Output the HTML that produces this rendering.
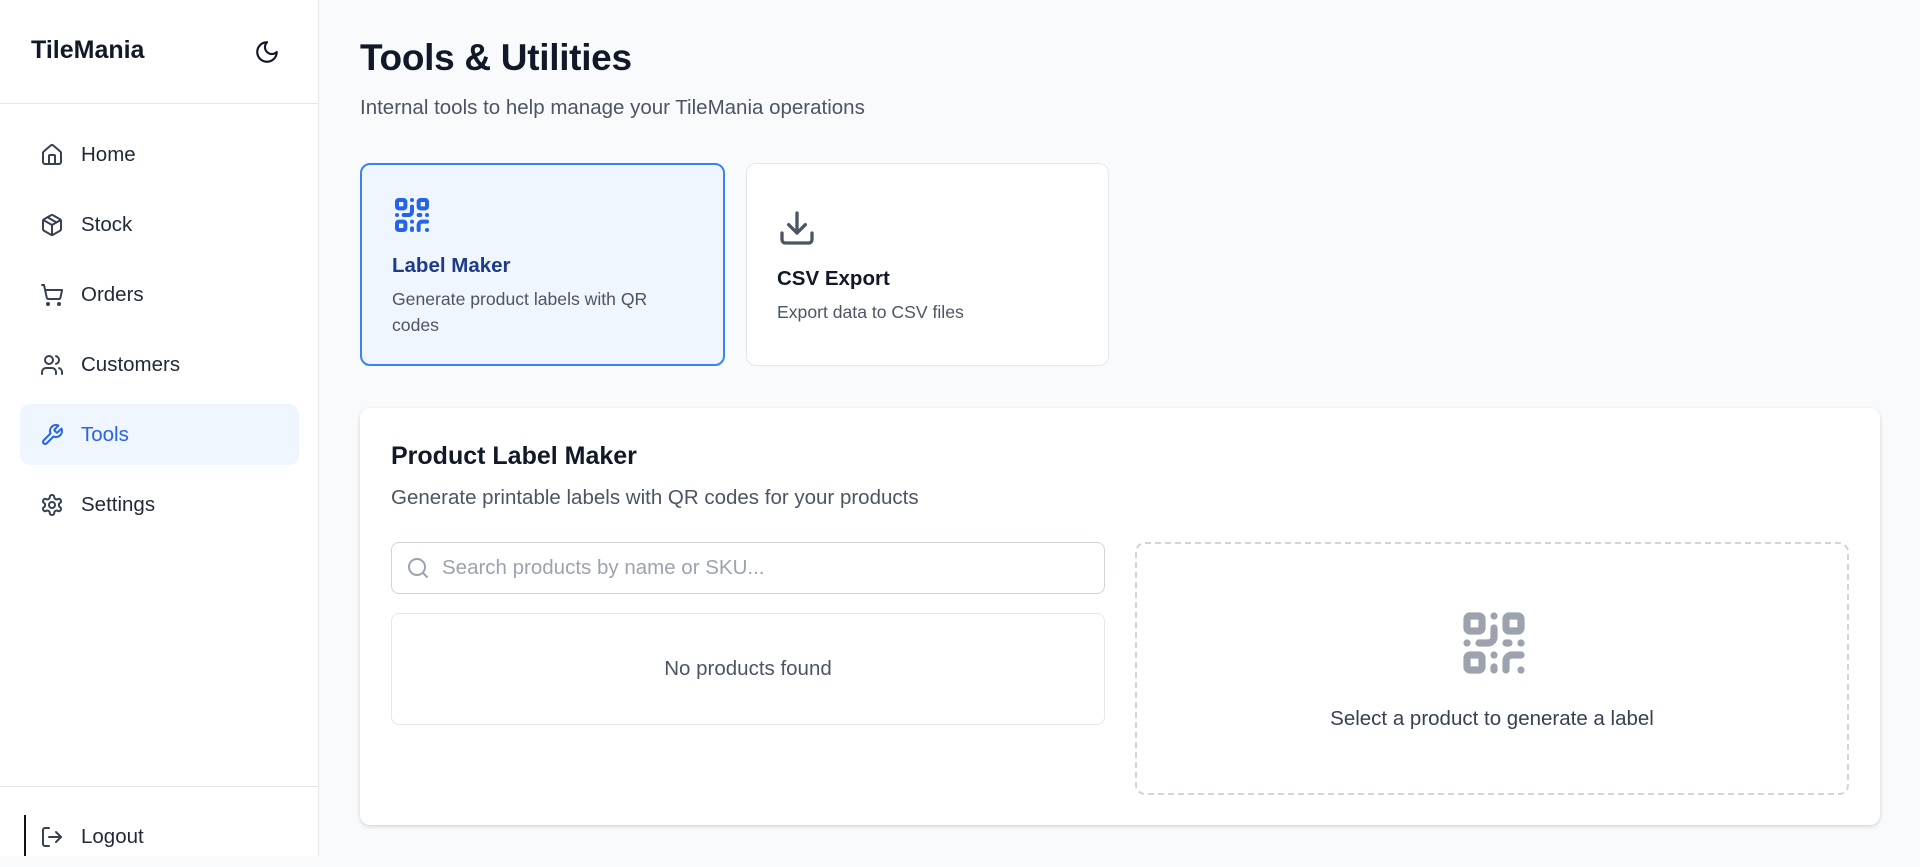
<!DOCTYPE html>
<html><head><meta charset="utf-8"><style>
*{box-sizing:border-box;margin:0;padding:0}
body{width:1920px;height:856px;overflow:hidden;background:#f9fafb;font-family:"Liberation Sans",sans-serif;color:#111827;position:relative}
.side{position:absolute;left:0;top:0;width:319px;height:856px;background:#fff;border-right:1px solid #e5e7eb}
.brand{position:absolute;left:31px;top:36px;font-size:25px;font-weight:bold;color:#111827}
.moon{position:absolute;left:254px;top:39px}
.hr{position:absolute;left:0;width:319px;height:1px;background:#e5e7eb}
.nav{position:absolute;left:20px;width:279px;height:61px;border-radius:10px;display:flex;align-items:center;font-size:20.5px;color:#1f2937}
.nav svg{position:absolute;left:20px}
.nav span{position:absolute;left:61px}
.nav.act{background:#eff6ff;color:#2563eb}
svg{fill:none;stroke-linecap:round;stroke-linejoin:round}
h1{position:absolute;left:360px;top:37px;font-size:37px;font-weight:bold;color:#111827;letter-spacing:-0.3px}
.sub{position:absolute;left:360px;top:96px;font-size:20.5px;color:#4b5563}
.card{position:absolute;top:163px;height:203px;border-radius:10px;background:#fff;border:1.5px solid #e5e7eb}
.card.a{left:360px;width:365px;background:#eff6ff;border:2px solid #3b82f6}
.card.b{left:746px;width:363px}
.ct{position:absolute;font-size:20.5px;font-weight:bold}
.cd{position:absolute;font-size:17.6px;color:#4b5563;line-height:26px}
.panel{position:absolute;left:360px;top:408px;width:1520px;height:417px;background:#fff;border-radius:10px;box-shadow:0 1px 3px rgba(0,0,0,.12),0 2px 6px rgba(0,0,0,.06)}
.search{position:absolute;left:31px;top:134px;width:714px;height:52px;border:1.5px solid #d1d5db;border-radius:8px}
.empty{position:absolute;left:31px;top:205px;width:714px;height:112px;border:1.5px solid #e5e7eb;border-radius:8px;text-align:center;line-height:109px;font-size:20.5px;color:#4b5563}
.dash{position:absolute;left:775px;top:134px;width:714px;height:253px;border:2px dashed #d1d5db;border-radius:10px}
</style></head><body>
<div class="side">
  <div class="brand">TileMania</div>
  <svg class="moon" width="26" height="26" viewBox="0 0 24 24" stroke="#111827" stroke-width="2"><path d="M12 3a6 6 0 0 0 9 9 9 9 0 1 1-9-9Z"/></svg>
  <div class="hr" style="top:103px"></div>
  <div class="nav" style="top:124px"><svg width="24" height="24" viewBox="0 0 24 24" stroke="#374151" stroke-width="2"><path d="M15 21v-8a1 1 0 0 0-1-1h-4a1 1 0 0 0-1 1v8"/><path d="M3 10a2 2 0 0 1 .709-1.528l7-5.999a2 2 0 0 1 2.582 0l7 5.999A2 2 0 0 1 21 10v9a2 2 0 0 1-2 2H5a2 2 0 0 1-2-2z"/></svg><span>Home</span></div>
  <div class="nav" style="top:194px"><svg width="24" height="24" viewBox="0 0 24 24" stroke="#374151" stroke-width="2"><path d="M21 8a2 2 0 0 0-1-1.730l-7-4a2 2 0 0 0-2 0l-7 4A2 2 0 0 0 3 8v8a2 2 0 0 0 1 1.73l7 4a2 2 0 0 0 2 0l7-4A2 2 0 0 0 21 16Z"/><path d="m3.3 7 8.7 5 8.7-5"/><path d="M12 22V12"/><path d="m7.5 4.27 9 5.15"/></svg><span>Stock</span></div>
  <div class="nav" style="top:264px"><svg width="24" height="24" viewBox="0 0 24 24" stroke="#374151" stroke-width="2"><circle cx="8" cy="21" r="1"/><circle cx="19" cy="21" r="1"/><path d="M2.05 2.05h2l2.66 12.42a2 2 0 0 0 2 1.580h9.78a2 2 0 0 0 1.95-1.57l1.65-7.43H5.12"/></svg><span>Orders</span></div>
  <div class="nav" style="top:334px"><svg width="24" height="24" viewBox="0 0 24 24" stroke="#374151" stroke-width="2"><path d="M16 21v-2a4 4 0 0 0-4-4H6a4 4 0 0 0-4 4v2"/><circle cx="9" cy="7" r="4"/><path d="M22 21v-2a4 4 0 0 0-3-3.87"/><path d="M16 3.13a4 4 0 0 1 0 7.75"/></svg><span>Customers</span></div>
  <div class="nav act" style="top:404px"><svg width="24" height="24" viewBox="0 0 24 24" stroke="#2563eb" stroke-width="2"><path d="M14.7 6.3a1 1 0 0 0 0 1.4l1.6 1.6a1 1 0 0 0 1.4 0l3.77-3.77a6 6 0 0 1-7.94 7.94l-6.91 6.910a2.12 2.12 0 0 1-3-3l6.91-6.91a6 6 0 0 1 7.94-7.94l-3.76 3.76z"/></svg><span>Tools</span></div>
  <div class="nav" style="top:474px"><svg width="24" height="24" viewBox="0 0 24 24" stroke="#374151" stroke-width="2"><path d="M12.22 2h-.44a2 2 0 0 0-2 2v.18a2 2 0 0 1-1 1.73l-.43.25a2 2 0 0 1-2 0l-.15-.08a2 2 0 0 0-2.73.73l-.22.38a2 2 0 0 0 .73 2.73l.15.1a2 2 0 0 1 1 1.72v.51a2 2 0 0 1-1 1.74l-.15.09a2 2 0 0 0-.73 2.73l.22.38a2 2 0 0 0 2.73.73l.15-.08a2 2 0 0 1 2 0l.43.25a2 2 0 0 1 1 1.73V20a2 2 0 0 0 2 2h.44a2 2 0 0 0 2-2v-.18a2 2 0 0 1 1-1.73l.43-.25a2 2 0 0 1 2 0l.15.08a2 2 0 0 0 2.73-.73l.22-.39a2 2 0 0 0-.73-2.73l-.15-.08a2 2 0 0 1-1-1.74v-.5a2 2 0 0 1 1-1.74l.15-.09a2 2 0 0 0 .73-2.73l-.22-.38a2 2 0 0 0-2.73-.73l-.15.08a2 2 0 0 1-2 0l-.43-.25a2 2 0 0 1-1-1.73V4a2 2 0 0 0-2-2z"/><circle cx="12" cy="12" r="3"/></svg><span>Settings</span></div>
  <div class="hr" style="top:786px"></div>
  <div style="position:absolute;left:24px;top:815px;width:2px;height:41px;background:#111"></div>
  <div class="nav" style="top:806px"><svg width="24" height="24" viewBox="0 0 24 24" stroke="#374151" stroke-width="2"><path d="M9 21H5a2 2 0 0 1-2-2V5a2 2 0 0 1 2-2h4"/><polyline points="16 17 21 12 16 7"/><line x1="21" x2="9" y1="12" y2="12"/></svg><span>Logout</span></div>
</div>

<h1>Tools &amp; Utilities</h1>
<div class="sub">Internal tools to help manage your TileMania operations</div>

<div class="card a">
  <svg style="position:absolute;left:30px;top:30px" width="40" height="40" viewBox="0 0 24 24" stroke="#2563eb" stroke-width="2.4"><rect width="5" height="5" x="3" y="3" rx="1"/><rect width="5" height="5" x="16" y="3" rx="1"/><rect width="5" height="5" x="3" y="16" rx="1"/><path d="M21 16h-3a2 2 0 0 0-2 2v3"/><path d="M21 21v.01"/><path d="M12 7v3a2 2 0 0 1-2 2H7"/><path d="M3 12h.01"/><path d="M12 3h.01"/><path d="M12 16v.01"/><path d="M16 12h1"/><path d="M21 12v.01"/><path d="M12 21v-1"/></svg>
  <div class="ct" style="left:30px;top:89px;color:#1e3a8a">Label Maker</div>
  <div class="cd" style="left:30px;top:121px">Generate product labels with QR<br>codes</div>
</div>
<div class="card b">
  <svg style="position:absolute;left:30px;top:44px" width="40" height="40" viewBox="0 0 24 24" stroke="#4b5563" stroke-width="2"><path d="M21 15v4a2 2 0 0 1-2 2H5a2 2 0 0 1-2-2v-4"/><polyline points="7 10 12 15 17 10"/><line x1="12" x2="12" y1="15" y2="3"/></svg>
  <div class="ct" style="left:30px;top:103px">CSV Export</div>
  <div class="cd" style="left:30px;top:135px">Export data to CSV files</div>
</div>

<div class="panel">
  <div style="position:absolute;left:31px;top:34px;font-size:25px;font-weight:bold">Product Label Maker</div>
  <div style="position:absolute;left:31px;top:78px;font-size:20.5px;color:#4b5563">Generate printable labels with QR codes for your products</div>
  <div class="search">
    <svg style="position:absolute;left:14px;top:13px" width="24" height="24" viewBox="0 0 24 24" stroke="#9ca3af" stroke-width="2"><circle cx="11" cy="11" r="8"/><path d="m21 21-4.3-4.3"/></svg>
    <div style="position:absolute;left:50px;top:13px;font-size:20.5px;color:#9ca3af">Search products by name or SKU...</div>
  </div>
  <div class="empty">No products found</div>
  <div class="dash">
    <svg style="position:absolute;left:321px;top:63px" width="72" height="72" viewBox="0 0 24 24" stroke="#9ca3af" stroke-width="2.4"><rect width="5" height="5" x="3" y="3" rx="1"/><rect width="5" height="5" x="16" y="3" rx="1"/><rect width="5" height="5" x="3" y="16" rx="1"/><path d="M21 16h-3a2 2 0 0 0-2 2v3"/><path d="M21 21v.01"/><path d="M12 7v3a2 2 0 0 1-2 2H7"/><path d="M3 12h.01"/><path d="M12 3h.01"/><path d="M12 16v.01"/><path d="M16 12h1"/><path d="M21 12v.01"/><path d="M12 21v-1"/></svg>
    <div style="position:absolute;left:0;right:0;top:163px;text-align:center;font-size:20.5px;color:#374151">Select a product to generate a label</div>
  </div>
</div>
</body></html>
